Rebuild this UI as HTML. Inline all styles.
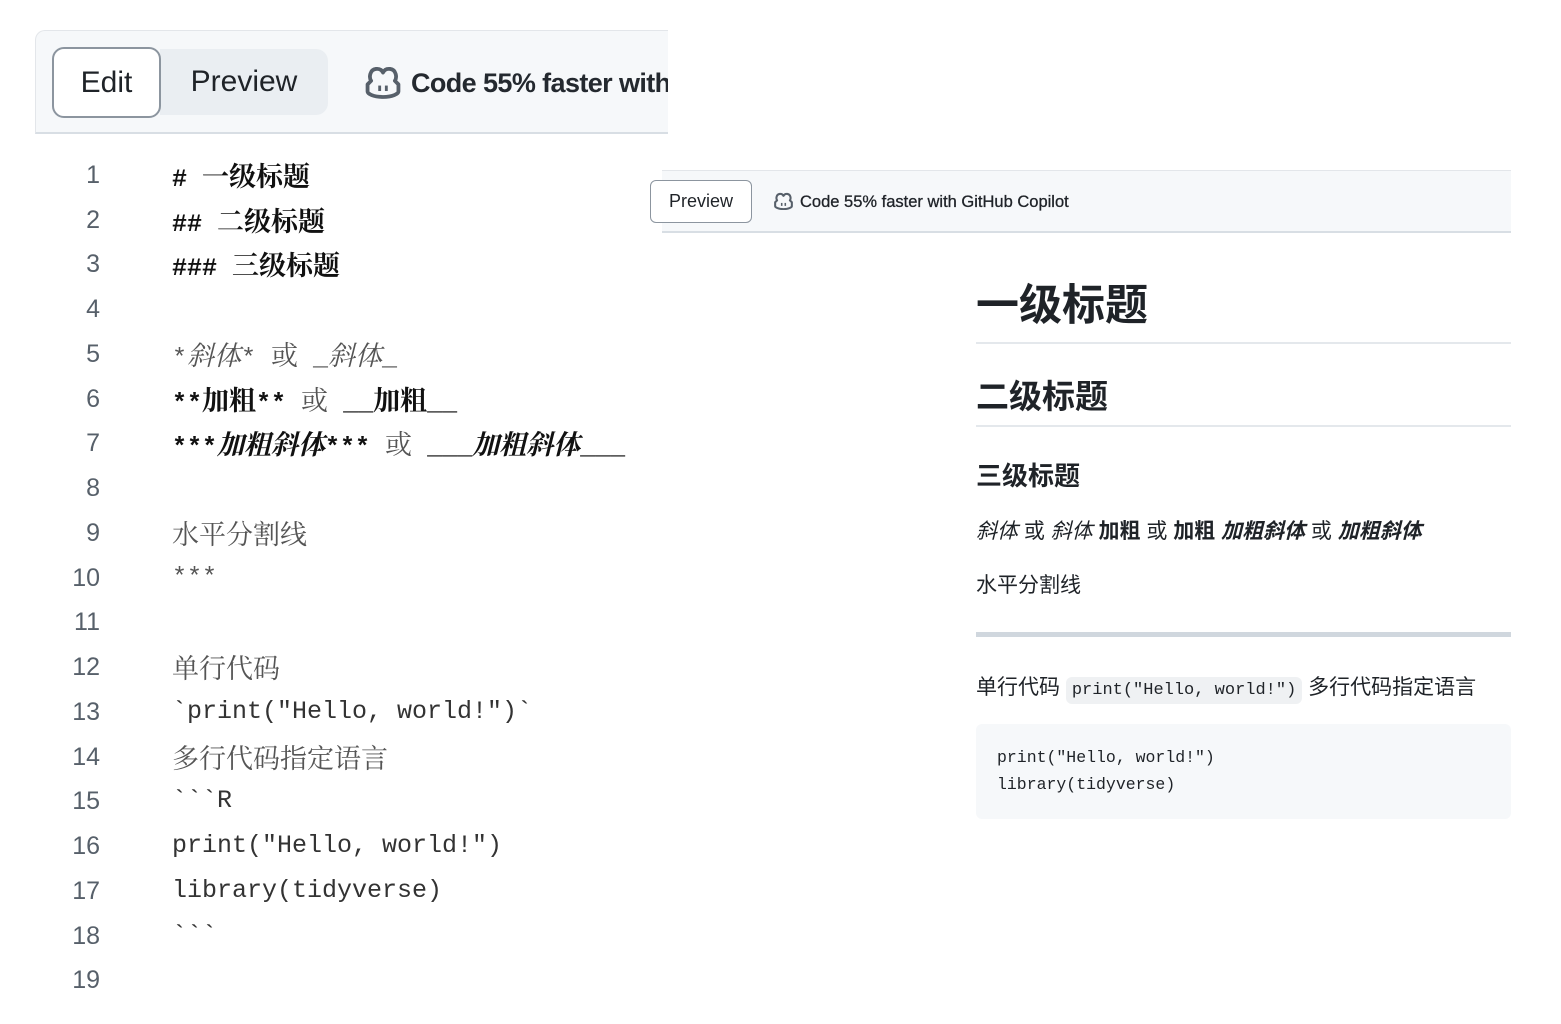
<!DOCTYPE html>
<html><head><meta charset="utf-8"><style>
*{margin:0;padding:0;box-sizing:border-box}
body{width:1561px;height:1024px;background:#fff;position:relative;overflow:hidden;font-family:"Liberation Sans","Noto Sans CJK SC",sans-serif;color:#1f2328}
.abs{position:absolute}
.ln{position:absolute;left:40px;width:60px;text-align:right;font-family:"Liberation Sans",sans-serif;font-size:25px;color:#57606a;line-height:44.8px}
.cd{position:absolute;left:172px;font-family:"Liberation Mono","Noto Serif CJK SC",monospace;font-size:25px;line-height:44.8px;color:#333;white-space:pre}
.cj{font-family:"Noto Serif CJK SC",serif;font-size:27px}
.b{font-weight:bold;color:#111}
.i{font-style:italic}
.g{color:#555}
</style></head><body>
<div class="abs" style="left:35px;top:30px;width:633px;height:104px;background:#f6f8fa;border-top:1px solid #e3e6ea;border-left:1px solid #e3e6ea;border-bottom:2px solid #d8dee4;border-top-left-radius:10px"></div>
<div class="abs" style="left:160px;top:49px;width:168px;height:66px;background:#eaeef2;border-radius:0 12px 12px 0"></div>
<div class="abs" style="left:52px;top:47px;width:109px;height:71px;background:#fff;border:2px solid #8c959f;border-radius:12px;font-size:30px;line-height:67px;text-align:center;color:#1f2328">Edit</div>
<div class="abs" style="left:160px;top:49px;width:168px;height:66px;font-size:30px;line-height:66px;text-align:center;color:#1f2328">Preview</div>
<svg class="abs" style="left:364px;top:65px" width="38" height="34" viewBox="0 0 16 14"><path d="M3 6.5C2 5 2.5 1.8 5 1.5 6.5 1.3 7.5 2 8 3 8.5 2 9.5 1.3 11 1.5 13.5 1.8 14 5 13 6.5L14.5 8V11C14.5 12 12 13.3 8 13.3 4 13.3 1.5 12 1.5 11V8Z" fill="none" stroke="#57606a" stroke-width="1.6" stroke-linejoin="round"/><rect x="6" y="8.5" width="1.2" height="2.3" fill="#57606a"/><rect x="8.8" y="8.5" width="1.2" height="2.3" fill="#57606a"/></svg>
<div class="abs" style="left:411px;top:64px;font-size:27px;line-height:38px;font-weight:bold;color:#24292f;white-space:nowrap;width:257px;overflow:hidden;letter-spacing:-0.6px">Code 55% faster with</div>

<div class="ln" style="top:153px">1</div><div class="ln" style="top:198px">2</div><div class="ln" style="top:242px">3</div><div class="ln" style="top:287px">4</div><div class="ln" style="top:332px">5</div><div class="ln" style="top:377px">6</div><div class="ln" style="top:421px">7</div><div class="ln" style="top:466px">8</div><div class="ln" style="top:511px">9</div><div class="ln" style="top:556px">10</div><div class="ln" style="top:600px">11</div><div class="ln" style="top:645px">12</div><div class="ln" style="top:690px">13</div><div class="ln" style="top:735px">14</div><div class="ln" style="top:779px">15</div><div class="ln" style="top:824px">16</div><div class="ln" style="top:869px">17</div><div class="ln" style="top:914px">18</div><div class="ln" style="top:958px">19</div>

<div class="cd b" style="top:153px"># <span class="cj">一级标题</span></div>
<div class="cd b" style="top:198px">## <span class="cj">二级标题</span></div>
<div class="cd b" style="top:242px">### <span class="cj">三级标题</span></div>
<div class="cd g" style="top:332px">*<span class="cj i">斜体</span>* <span class="cj">或</span> _<span class="cj i">斜体</span>_</div>
<div class="cd" style="top:377px"><span class="b">**<span class="cj">加粗</span>**</span> <span class="cj g">或</span> <span class="b">__<span class="cj">加粗</span>__</span></div>
<div class="cd" style="top:421px"><span class="b">***<span class="cj i">加粗斜体</span>***</span> <span class="cj g">或</span> <span class="b">___<span class="cj i">加粗斜体</span>___</span></div>
<div class="cd g cj" style="top:511px">水平分割线</div>
<div class="cd g" style="top:556px">***</div>
<div class="cd g cj" style="top:645px">单行代码</div>
<div class="cd" style="top:690px">&#96;print("Hello, world!")&#96;</div>
<div class="cd g cj" style="top:735px">多行代码指定语言</div>
<div class="cd" style="top:779px">&#96;&#96;&#96;R</div>
<div class="cd" style="top:824px">print("Hello, world!")</div>
<div class="cd" style="top:869px">library(tidyverse)</div>
<div class="cd" style="top:914px">&#96;&#96;&#96;</div>

<div class="abs" style="left:662px;top:170px;width:849px;height:63px;background:#f6f8fa;border-top:1px solid #e3e6ea;border-bottom:2px solid #d8dee4"></div>
<div class="abs" style="left:650px;top:180px;width:102px;height:43px;background:#fff;border:1px solid #8c959f;border-radius:6px;font-size:18px;line-height:41px;padding-left:18px;color:#1f2328">Preview</div>
<svg class="abs" style="left:773px;top:192px" width="21" height="18" viewBox="0 0 16 14"><path d="M3 6.5C2 5 2.5 1.8 5 1.5 6.5 1.3 7.5 2 8 3 8.5 2 9.5 1.3 11 1.5 13.5 1.8 14 5 13 6.5L14.5 8V11C14.5 12 12 13.3 8 13.3 4 13.3 1.5 12 1.5 11V8Z" fill="none" stroke="#57606a" stroke-width="1.6" stroke-linejoin="round"/><rect x="6" y="8.5" width="1.2" height="2.3" fill="#57606a"/><rect x="8.8" y="8.5" width="1.2" height="2.3" fill="#57606a"/></svg>
<div class="abs" style="left:800px;top:190px;font-size:16.5px;line-height:24px;color:#1f2328;white-space:nowrap;-webkit-text-stroke:0.3px #1f2328">Code 55% faster with GitHub Copilot</div>

<div class="abs" style="left:976px;top:281px;font-size:43px;line-height:50px;font-weight:bold">一级标题</div>
<div class="abs" style="left:976px;top:342px;width:535px;height:2px;background:#e4e8ec"></div>
<div class="abs" style="left:976px;top:377px;font-size:33px;line-height:40px;font-weight:bold">二级标题</div>
<div class="abs" style="left:976px;top:425px;width:535px;height:2px;background:#e4e8ec"></div>
<div class="abs" style="left:976px;top:460px;font-size:26px;line-height:32px;font-weight:bold">三级标题</div>
<div class="abs" style="left:976px;top:518px;font-size:21px;line-height:28px;white-space:nowrap"><i>斜体</i> 或 <i>斜体</i> <b>加粗</b> 或 <b>加粗</b> <b><i>加粗斜体</i></b> 或 <b><i>加粗斜体</i></b></div>
<div class="abs" style="left:976px;top:572px;font-size:21px;line-height:28px">水平分割线</div>
<div class="abs" style="left:976px;top:632px;width:535px;height:5px;background:#d0d7de"></div>
<div class="abs" style="left:976px;top:674px;font-size:21px;line-height:28px;white-space:nowrap">单行代码 <span style="font-family:'Liberation Mono',monospace;font-size:17px;background:#eff1f3;border-radius:6px;padding:4px 6px">print("Hello, world!")</span> 多行代码指定语言</div>
<div class="abs" style="left:976px;top:724px;width:535px;height:95px;background:#f6f8fa;border-radius:6px"></div>
<div class="abs" style="left:997px;top:744px;font-family:'Liberation Mono',monospace;font-size:16.5px;line-height:27px;white-space:pre;color:#1f2328">print("Hello, world!")
library(tidyverse)</div>
</body></html>
